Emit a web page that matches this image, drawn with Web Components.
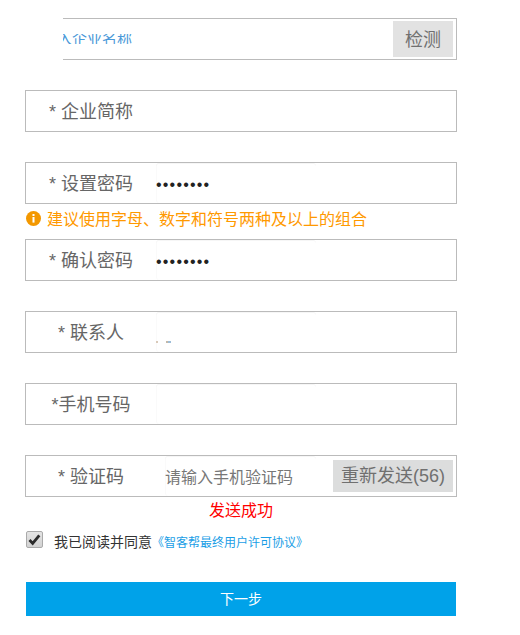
<!DOCTYPE html>
<html lang="zh">
<head>
<meta charset="utf-8">
<title>注册</title>
<style>
  html, body { margin: 0; background: #fff; }
  body { font-family: "Liberation Sans", "Noto Sans CJK SC", sans-serif; }
</style>
</head>
<body>
<template id="form-row-template">
  <style>
    * { box-sizing: border-box; }
    :host { box-sizing: border-box; display: flex; position: relative; height: 42px; border: 1px solid #bbb; background: #fff; color: #666; font-size: 18px; }
    :host([masked]) .mask { display: block; }
    .mask { display: none; position: absolute; left: -1px; top: -1px; bottom: -1px; width: 38px; background: #fff; }
    .label { flex: none; width: 130px; line-height: 42px; text-align: center; white-space: pre; }
    .field { flex: 1; min-width: 0; display: flex; align-items: center; }
    .action { flex: none; padding: 3px; display: flex; align-items: center; }
  </style>
  <div class="label"><slot name="label"></slot></div>
  <div class="field"><slot></slot></div>
  <div class="action"><slot name="action"></slot></div>
  <div class="mask"></div>
</template>

<template id="form-input-template">
  <style>
    * { box-sizing: border-box; }
    :host { display: block; position: relative; width: 160px; height: 40px; }
    input { display: block; width: 100%; height: 100%; margin: 0; padding: 4px 0 0 0; border: 0; border-radius: 3px; outline: 0; background: #fff; box-shadow: inset 0 1px 0 #f6f6f6, inset 1px 0 0 #fafafa; color: #222; font: 16px "Liberation Sans", sans-serif; letter-spacing: 1.2px; }
    input::placeholder { color: #777; opacity: 1; font: 16px "Noto Sans CJK SC", sans-serif; letter-spacing: 0; }
    :host([placeholder]) { margin-left: 9px; width: 151px; }
    .specks { display: none; position: absolute; left: 0; top: 29px; width: 20px; height: 2px; background: linear-gradient(90deg, #d9c9b8 0 2px, transparent 2px 10px, #c4b8a8 10px 12px, #9dbdd8 12px 15px, transparent 15px); }
    :host([specks]) .specks { display: block; }
  </style>
  <input>
  <div class="specks"></div>
</template>

<template id="send-button-template">
  <style>
    :host { display: block; width: var(--btn-w, 60px); height: var(--btn-h, 36px); background: var(--btn-bg, #e2e2e2); color: #707070; font-size: 18px; line-height: var(--btn-lh, 38px); text-align: center; white-space: nowrap; cursor: pointer; }
  </style>
  <slot></slot>
</template>

<template id="hint-line-template">
  <style>
    :host { box-sizing: border-box; display: flex; align-items: center; height: 35px; padding: 0 0 7px 1px; gap: 6px; color: #f90; font-size: 16px; }
    svg { flex: none; }
  </style>
  <svg width="15" height="15" viewBox="0 0 15 15">
    <circle cx="7.5" cy="7.5" r="7.5" fill="#f39800"/>
    <rect x="6.5" y="6" width="2" height="5.6" fill="#fff"/>
    <rect x="6.5" y="3" width="2" height="2" fill="#fff"/>
  </svg>
  <slot></slot>
</template>

<template id="agree-line-template">
  <style>
    :host { box-sizing: border-box; display: flex; align-items: center; height: 20px; padding: 2px 0 0 1px; color: #333; font-size: 14px; white-space: nowrap; }
    input { appearance: none; flex: none; width: 17px; height: 17px; margin: 0 11px 0 0; border: 1px solid #aaa; border-radius: 2px; background: linear-gradient(#e4e4e4, #d2d2d2); position: relative; }
    svg { position: absolute; left: 1px; top: 1px; }
    .box { position: relative; display: flex; flex: none; align-self: flex-start; margin-top: -1px; }
    ::slotted(a) { color: #1a9ee6; font-size: 12px; text-decoration: none; }
  </style>
  <div class="box">
    <input type="checkbox" checked>
    <svg width="15" height="15" viewBox="0 0 15 15"><path d="M2.5 8l3.2 3.4 6.6-8" fill="none" stroke="#2b2b2b" stroke-width="2.8"/></svg>
  </div>
  <slot></slot>
</template>

<template id="next-button-template">
  <style>
    :host { display: block; height: 34px; margin: 0 1px; background: #00a2e9; color: #fff; font-size: 14px; line-height: 34px; text-align: center; cursor: pointer; }
  </style>
  <slot></slot>
</template>

<template id="signup-form-template">
  <style>
    :host { display: block; width: 432px; margin-left: 25px; padding-top: 18px; font-family: "Liberation Sans", "Noto Sans CJK SC", sans-serif; }
    ::slotted(.gap) { height: 30px; }
    ::slotted(.sent) { height: 33px; padding-top: 2px; box-sizing: border-box; color: red; font-size: 16px; line-height: 24px; text-align: center; }
    ::slotted(.tail) { height: 32px; }
  </style>
  <slot></slot>
</template>

<signup-form>
  <form-row masked>
    <span class="smudge" style="display:block;width:69px;height:10px;margin-left:-93px;overflow:hidden;color:#4a98d8;font-size:15px;line-height:10px;white-space:nowrap;text-indent:-36px">请输入企业名称</span>
    <send-button slot="action">检测</send-button>
  </form-row>
  <div class="gap"></div>
  <form-row><span slot="label">* 企业简称</span></form-row>
  <div class="gap"></div>
  <form-row>
    <span slot="label">* 设置密码</span>
    <form-input value="12345678" type="password"></form-input>
  </form-row>
  <hint-line>建议使用字母、数字和符号两种及以上的组合</hint-line>
  <form-row>
    <span slot="label">* 确认密码</span>
    <form-input value="12345678" type="password"></form-input>
  </form-row>
  <div class="gap"></div>
  <form-row>
    <span slot="label">* 联系人</span>
    <form-input specks></form-input>
  </form-row>
  <div class="gap"></div>
  <form-row>
    <span slot="label">*手机号码</span>
    <form-input></form-input>
  </form-row>
  <div class="gap"></div>
  <form-row>
    <span slot="label">* 验证码</span>
    <form-input placeholder="请输入手机验证码"></form-input>
    <send-button slot="action" style="--btn-bg:#dcdddd;--btn-w:120px;--btn-h:32px;--btn-lh:32px">重新发送(56)</send-button>
  </form-row>
  <div class="sent">发送成功</div>
  <agree-line>我已阅读并同意<a href="#">《智客帮最终用户许可协议》</a></agree-line>
  <div class="tail"></div>
  <next-button>下一步</next-button>
</signup-form>

<script>
  class TemplateElement extends HTMLElement {
    constructor(templateId) {
      super();
      this.attachShadow({ mode: 'open' });
      this.shadowRoot.appendChild(document.getElementById(templateId).content.cloneNode(true));
    }
  }

  class SignupForm extends TemplateElement {
    constructor() { super('signup-form-template'); }
  }

  class FormRow extends TemplateElement {
    constructor() { super('form-row-template'); }
  }

  class FormInput extends TemplateElement {
    constructor() { super('form-input-template'); }

    connectedCallback() {
      const input = this.shadowRoot.querySelector('input');
      input.type = this.getAttribute('type') || 'text';
      input.value = this.getAttribute('value') || '';
      input.placeholder = this.getAttribute('placeholder') || '';
    }
  }

  class SendButton extends TemplateElement {
    constructor() { super('send-button-template'); }
  }

  class HintLine extends TemplateElement {
    constructor() { super('hint-line-template'); }
  }

  class AgreeLine extends TemplateElement {
    constructor() { super('agree-line-template'); }
  }

  class NextButton extends TemplateElement {
    constructor() { super('next-button-template'); }
  }

  customElements.define('signup-form', SignupForm);
  customElements.define('form-row', FormRow);
  customElements.define('form-input', FormInput);
  customElements.define('send-button', SendButton);
  customElements.define('hint-line', HintLine);
  customElements.define('agree-line', AgreeLine);
  customElements.define('next-button', NextButton);
</script>
</body>
</html>
